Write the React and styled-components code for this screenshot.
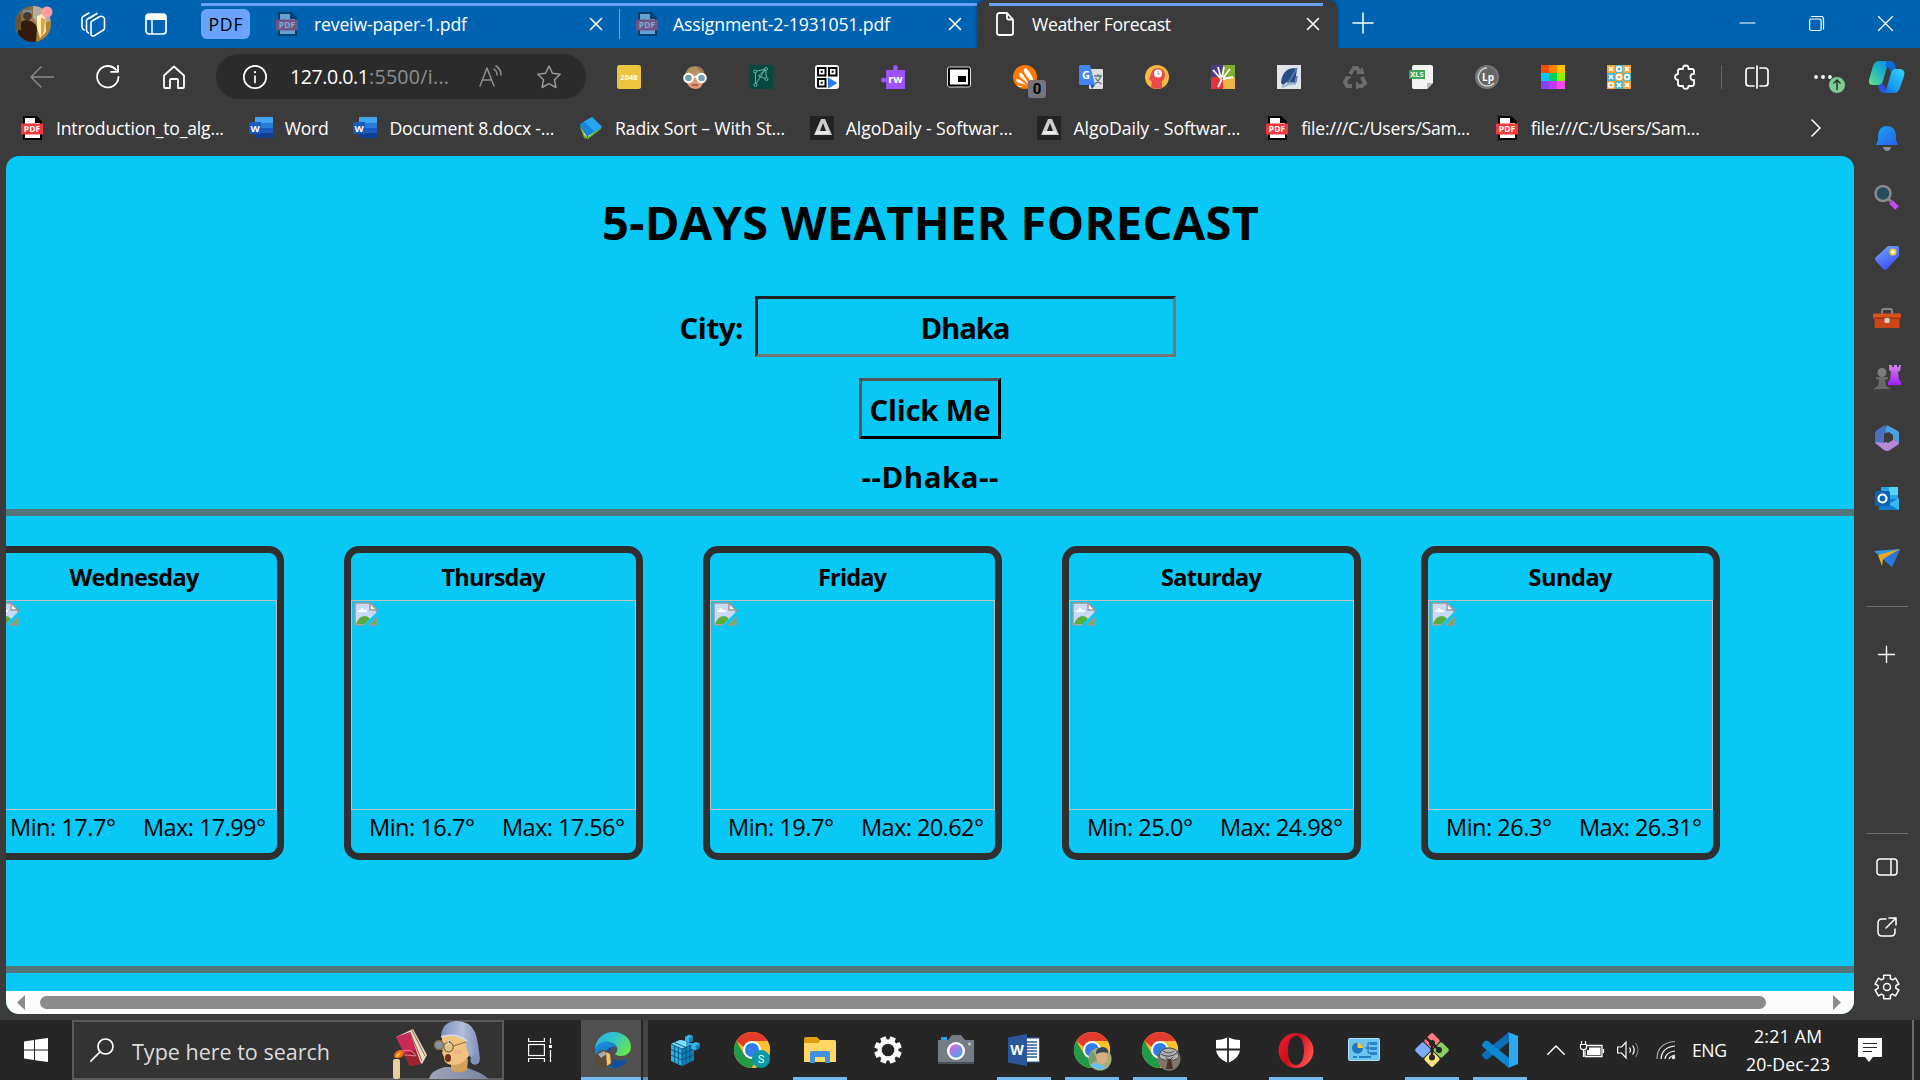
import React, { useLayoutEffect, useRef, useState } from "react";
import styled, { createGlobalStyle, css } from "styled-components";

const Global = createGlobalStyle`
  html, body { margin: 0; padding: 0; overflow: hidden; background: #3b3b3b; }
  * { box-sizing: border-box; }
  body { font-family: "Open Sans", "Noto Sans", sans-serif; }
  svg { display: block; flex: none; overflow: visible; }
`;

/* Text that is tracked in or out to fill a known width */
const FitBox = styled.span`
  display: block;
  flex: none;
  width: ${(p) => p.$w}px;
  margin-left: ${(p) => p.$ml || 0}px;
  white-space: pre;
`;
const FitInner = styled.span`
  display: inline-block;
  font-size: 0.98em;
`;
function Fit({ w, ml, children }) {
  const ref = useRef(null);
  const [spacing, setSpacing] = useState(0);
  const text = String(children);
  useLayoutEffect(() => {
    const natural = ref.current.getBoundingClientRect().width;
    setSpacing((w - natural) / (text.length - 1));
  }, [w, text]);
  return (
    <FitBox $w={w} $ml={ml}>
      <FitInner ref={ref} style={{ letterSpacing: spacing + "px" }}>{text}</FitInner>
    </FitBox>
  );
}

const Screen = styled.div`
  width: 1920px;
  height: 1080px;
  display: flex;
  flex-direction: column;
  background: #3b3b3b;
  color: #fff;
  overflow: hidden;
`;

const Slot = styled.div`
  flex: none;
  width: ${(p) => p.$w}px;
  height: ${(p) => (p.$h ? p.$h + "px" : "auto")};
  margin-left: ${(p) => p.$ml || 0}px;
  display: flex;
  align-items: center;
  justify-content: center;
  position: relative;
`;

/* ---------- tab strip ---------- */
const TabStrip = styled.div`
  flex: none;
  height: 48px;
  display: flex;
  background: #0063b1;
  font-size: 18px;
  line-height: 24px;
`;
const TabGroup = styled.div`
  width: 776px;
  margin-left: 34px;
  padding-top: 3px;
`;
const GroupLine = styled.div`
  height: 3px;
  margin: 0 ${(p) => p.$r || 0}px 0 ${(p) => p.$l || 0}px;
  background: #69a1fa;
`;
const TabRow = styled.div`
  height: 36px;
  display: flex;
  align-items: center;
`;
const GroupPill = styled.div`
  width: 49px;
  height: 30px;
  display: flex;
  justify-content: center;
  align-items: center;
  background: #6ba3fb;
  color: #000;
  border-radius: 6px;
`;
const TabDivider = styled.div`
  width: 1px;
  height: 30px;
  margin: 0 16px 0 16px;
  background: #6fa5d2;
`;
const ActiveTab = styled.div`
  width: 360px;
  padding-top: 3px;
  background: #3b3b3b;
  border-radius: 9px 9px 0 0;
  box-shadow: 0 0 4px rgba(0, 0, 0, 0.45);
`;

/* ---------- toolbar ---------- */
const Toolbar = styled.div`
  flex: none;
  position: relative;
  height: 57px;
  display: flex;
  align-items: center;
  background: #3b3b3b;
`;
const Address = styled.div`
  width: 370px;
  height: 45px;
  margin-left: 30px;
  display: flex;
  align-items: center;
  border-radius: 23px;
  background: #2b2b2b;
  font-size: 20px;
  line-height: 28px;
`;
const Dim = styled.div`
  color: #8f8f8f;
`;
const Badge = styled.div`
  position: absolute;
  left: 15px;
  top: 15px;
  width: 18px;
  height: 18px;
  border-radius: 3px;
  background: #757581;
  color: #000;
  font: bold 15px/19px Roboto, sans-serif;
  text-align: center;
`;
const Separator = styled.div`
  width: 1px;
  height: 24px;
  margin-left: 24px;
  background: #666;
`;

const Body = styled.div`
  height: 915px;
  display: flex;
`;
const Left = styled.div`
  width: 1854px;
`;
const Bookmarks = styled.div`
  height: 51px;
  padding-left: 20px;
  display: flex;
  align-items: center;
  font-size: 18px;
  line-height: 24px;
  padding-bottom: 5px;
`;
const Bookmark = styled.div`
  display: flex;
  align-items: center;
  margin-right: 24.7px;
  gap: 12px;
`;

/* ---------- page ---------- */
const View = styled.main`
  width: 1848px;
  height: 858px;
  margin-left: 6px;
  display: flex;
  flex-direction: column;
  align-items: center;
  border-radius: 13px;
  background: #08c8f6;
  color: #000;
  overflow: hidden;
`;
const Title = styled.h1`
  margin: 34px 0 0;
  font-size: 48px;
  line-height: 64px;
  font-weight: 700;
`;
const CityRow = styled.div`
  margin: 42px 5px 0 0;
  display: flex;
  align-items: center;
  font-size: 30px;
  line-height: 40px;
  font-weight: 700;
`;
const CityLabel = styled.div`
  padding-top: 3px;
`;
const CityInput = styled.div`
  width: 421px;
  height: 61px;
  margin-left: 11px;
  padding-top: 3px;
  padding-left: 1px;
  display: flex;
  align-items: center;
  justify-content: center;
  border: 3px solid;
  border-color: #212121 #767676 #767676 #212121;
`;
const Button = styled.div`
  width: 142px;
  height: 61px;
  margin-top: 21px;
  padding-top: 2px;
  display: flex;
  align-items: center;
  justify-content: center;
  border: 3px solid;
  border-color: #555 #000 #000 #555;
  font-size: 30px;
  font-weight: 700;
`;
const CityName = styled.div`
  margin-top: 18px;
  font-size: 30px;
  line-height: 40px;
  font-weight: 700;
`;
const Rule = styled.div`
  flex: none;
  width: 100%;
  height: 7px;
  margin-top: ${(p) => p.$mt}px;
  background: #52757b;
`;
const Cards = styled.div`
  align-self: flex-start;
  flex: none;
  margin: 30px 0 0 -21px;
  display: flex;
  gap: 60px;
`;
const Card = styled.section`
  flex: none;
  width: 299px;
  height: 314px;
  border: 7px solid #2f2f2f;
  border-radius: 15px;
  font-size: 24px;
`;
const Day = styled.div`
  height: 47px;
  display: flex;
  align-items: center;
  justify-content: center;
  font-weight: 700;
`;
const Picture = styled.div`
  height: 210px;
  border: 1px solid #c0c0c0;
  padding: 1px 2px;
`;
const Temps = styled.div`
  display: flex;
  line-height: 34px;
  padding-left: 18px;
`;
const Scrollbar = styled.div`
  flex: none;
  width: 100%;
  height: 23px;
  margin-top: auto;
  padding: 0 12px 0 11px;
  display: flex;
  align-items: center;
  background: #fcfcfc;
`;
const Thumb = styled.div`
  width: 1726px;
  height: 13px;
  margin: 0 67px 0 15px;
  border-radius: 7px;
  background: #8b8b8b;
`;

/* ---------- sidebar ---------- */
const Sidebar = styled.aside`
  width: 66px;
  display: flex;
  flex-direction: column;
  align-items: center;
  padding-top: 3px;
`;
const SideSlot = styled.div`
  flex: none;
  height: 60px;
  display: flex;
  align-items: center;
`;
const SideLine = styled.div`
  flex: none;
  width: 42px;
  height: 1px;
  background: #6f6f6f;
  margin-top: ${(p) => p.$mt}px;
  margin-bottom: ${(p) => p.$mb || 0}px;
`;

/* ---------- taskbar ---------- */
const Taskbar = styled.footer`
  flex: none;
  height: 60px;
  display: flex;
  background: #262626;
`;
const Search = styled.div`
  width: 432px;
  height: 60px;
  border: 2px solid #5a5a5a;
  background: #333;
  display: flex;
  align-items: center;
  padding-left: 16px;
  font-size: 22px;
  color: #dcdcdc;
`;
const SearchText = styled.div`
  padding-top: 2px;
`;
const Task = styled.div`
  flex: none;
  width: ${(p) => p.$w || 54}px;
  height: 60px;
  margin-left: ${(p) => (p.$ml === undefined ? 14 : p.$ml)}px;
  display: flex;
  align-items: center;
  justify-content: center;
  ${(p) => p.$hot && css`background: #505050;`}
  ${(p) => p.$on && css`box-shadow: inset 0 -3px 0 #76b9ed;`}
`;
const TaskEdge = styled.div`
  width: 5px;
  margin-left: 2px;
  background: #444;
  box-shadow: inset 0 -3px 0 #5e93bd;
`;
const Clock = styled.div`
  width: 86px;
  margin-left: 18px;
  display: flex;
  flex-direction: column;
  align-items: center;
  font-size: 18px;
  line-height: 28px;
  padding-top: 2px;
`;
const Lang = styled.div`
  font-size: 18px;
  line-height: 60px;
`;
const ShowDesktop = styled.div`
  width: 2px;
  margin-left: 30px;
  background: #6b6b6b;
`;

/* ---------- icons ---------- */
const Svg = ({ w = 24, h, vb, children, ...rest }) => (
  <svg width={w} height={h || w} viewBox={vb || `0 0 ${w} ${h || w}`} fill="none" {...rest}>{children}</svg>
);
const Line = ({ d, w = 24, h, c = "#fff", sw = 1.6, children }) => (
  <Svg w={w} h={h} stroke={c} strokeWidth={sw} strokeLinecap="round" strokeLinejoin="round">
    <path d={d} />
    {children}
  </Svg>
);
const Txt = ({ x, y, s, c = "#fff", children, anchor = "middle" }) => (
  <text x={x} y={y} fontSize={s} fill={c} stroke="none" fontWeight="bold" textAnchor={anchor} fontFamily="Open Sans, sans-serif">{children}</text>
);
const CloseX = ({ s = 12 }) => <Line w={s} d={`M0.5 0.5L${s - 0.5} ${s - 0.5}M${s - 0.5} 0.5L0.5 ${s - 0.5}`} />;

const Pdf = ({ faded }) => (
  <Svg w={24}>
    <path d="M4 1h12l5 5v17H4z" fill={faded ? "#66a1d0" : "#fff"} stroke={faded ? "#053d6b" : "#000"} strokeWidth="2" />
    <path d="M15 1v6h6" fill={faded ? "#053d6b" : "#000"} />
    <rect x="1" y="7.500" width="22" height="11" rx="1" fill={faded ? "#705483" : "#f3383b"} />
    <Txt x={12} y={16.300} s={8.500} c={faded ? "#79add6" : "#fff"}>PDF</Txt>
  </Svg>
);
const Avatar = () => (
  <Svg w={36}>
    <defs>
      <clipPath id="av"><circle cx="18" cy="18" r="18" /></clipPath>
      <linearGradient id="avg" x1="0" y1="0" x2="1" y2="1">
        <stop offset="0" stopColor="#5a564e" /><stop offset="0.5" stopColor="#a98746" /><stop offset="1" stopColor="#b77a25" />
      </linearGradient>
    </defs>
    <g clipPath="url(#av)">
      <rect width="36" height="36" fill="url(#avg)" />
      <path d="M18 0h18v15l-12 3-6-6z" fill="#b6ad9c" />
      <path d="M22 10l8-3 1 19-6 6-3-10z" fill="#fff0b8" />
      <path d="M26 12l4 1-1 13-3 5z" fill="#d9a441" />
      <path d="M3 18q5-4 9-4 8 1 10 8l-1 14H2z" fill="#33190e" />
      <circle cx="12.500" cy="10" r="4.300" fill="#4d3627" />
      <path d="M8 8q4-4 9 0V4H8z" fill="#778aa4" />
      <path d="M0 8h6v16H0z" fill="#6b5433" />
    </g>
    <circle cx="32" cy="6" r="5.500" fill="#ff9d9d" />
  </Svg>
);
const Word = () => (
  <Svg w={24}>
    <rect x="6" y="1" width="18" height="6" fill="#41a5ee" /><rect x="6" y="7" width="18" height="5" fill="#2b7cd3" />
    <rect x="6" y="12" width="18" height="5" fill="#185abd" /><rect x="6" y="17" width="18" height="5" fill="#103f91" />
    <rect x="0" y="6" width="12" height="12" fill="#185abd" /><Txt x={6} y={15.500} s={9.500}>W</Txt>
  </Svg>
);
const Book = () => (
  <Svg w={24}>
    <path d="M1 8v3l4 11 4 1 13-10v-3z" fill="#5cb52d" /><path d="M1 9l5 11 3 1 13-10v-2z" fill="#dfe9b8" />
    <path d="M13 1L1 8l8 12 14-9z" fill="#1287dc" /><path d="M13 1L5 5.500 16 16l7-5z" fill="#27a6ef" />
    <path d="M1 8l8 12v2L1 10z" fill="#0b5ea5" />
  </Svg>
);
const Algo = () => (
  <Svg w={24}>
    <rect width="24" height="24" fill="#222" />
    <path fillRule="evenodd" d="M11 3h4l7 16H4zM13 7l-3 8h6z" fill="#cdcdcd" /><rect x="6" y="15" width="13" height="3" fill="#e9e9e9" />
  </Svg>
);
const ChromeMark = ({ overlay }) => (
  <Svg w={36}>
    <circle cx="18" cy="18" r="18" fill="#fbc02d" />
    <path d="M2.400 9A18 18 0 0 1 33.600 9H18a9 9 0 0 0-8.500 6z" fill="#e33b2e" />
    <path d="M2.400 9A18 18 0 0 0 18 36l7.500-13.500L10.500 23z" fill="#1f9a49" />
    <path d="M18 9h15.600A18 18 0 0 1 18 36l8-14z" fill="#fbc02d" />
    <circle cx="18" cy="18" r="9" fill="#fff" /><circle cx="18" cy="18" r="7" fill="#2f7de9" />
    {overlay === "S" && <><circle cx="27" cy="27" r="9" fill="#0b9aa8" /><text x="27" y="31" fontSize="11" fill="#fff" textAnchor="middle" fontFamily="Roboto">S</text></>}
    {overlay === "man" && <><circle cx="26" cy="27" r="11.500" fill="#a9ad7c" /><path d="M16 32q-3-8 3-13l4 9z" fill="#7d9a6a" /><ellipse cx="28" cy="25" rx="5.500" ry="7" fill="#d9ad86" /><path d="M22 22q-1-6 7-7 6 1 5 6-6-2-12 1z" fill="#33485a" /><path d="M16 33q5-3 10-1 4 2 7 3-7 6-17-2z" fill="#6cc2ef" /></>}
    {overlay === "tree" && <><circle cx="27" cy="27" r="11.500" fill="#80766c" /><path d="M17 25q1-9 10-9t10 9q-5 5-10 2-5 3-10-2z" fill="#b2b2b2" stroke="#4c4c4c" /><path d="M19 22q8 5 16-1M21 19q6 4 11 0M24 25l3 4 4-4" stroke="#444" /><path d="M26 27h3l2 10h-7z" fill="#49332c" /></>}
  </Svg>
);
const Edge = () => (
  <Svg w={36}>
    <defs>
      <linearGradient id="eg" x1="0" y1="0" x2="1" y2="0.6"><stop offset="0" stopColor="#2aa9e8" /><stop offset="0.5" stopColor="#35c6c9" /><stop offset="1" stopColor="#62e44e" /></linearGradient>
      <linearGradient id="eb" x1="0" y1="0" x2="0.400" y2="1"><stop offset="0" stopColor="#1b93df" /><stop offset="1" stopColor="#0f66b8" /></linearGradient>
    </defs>
    <path d="M0 18C0 11 5 9 11 9c6 0 11 3 11 7-1-1-3-2-5-1-3 2-3 6-1 9 3 5 10 6 17 3-3 6-8 9-15 9C7 36 0 28 0 18z" fill="url(#eb)" />
    <path d="M11 22c0-4 3-7 7-7-3 2-4 6-2 9 3 5 10 6 17 3-3 6-8 9-14 9-5-3-8-8-8-14z" fill="#114f9d" />
    <path d="M0 17C1 6 9 0 18 0c11 0 18 7 18 15 0 6-5 9-10 9-4 0-7-2-5-3 3-4 1-8-3-10C12 8 3 9 0 17z" fill="url(#eg)" />
    <circle cx="9" cy="27" r="9" fill="#5c4937" /><path d="M11 20l4 2 1 9-4 3z" fill="#efc568" /><path d="M3 22l6-3 3 3-6 4z" fill="#aaa" />
  </Svg>
);
const Copilot = () => (
  <Svg w={36} h={32}>
    <defs>
      <linearGradient id="cp1" x1="1" y1="0" x2="0" y2="1"><stop offset="0" stopColor="#0883e8" /><stop offset="0.5" stopColor="#20b5c5" /><stop offset="1" stopColor="#68e486" /></linearGradient>
      <linearGradient id="cp2" x1="1" y1="0" x2="0" y2="1"><stop offset="0" stopColor="#3bd2f7" /><stop offset="0.6" stopColor="#169ff0" /><stop offset="1" stopColor="#1b55d6" /></linearGradient>
    </defs>
    <path d="M10 0h13q-4 2-5 6l-4 14q-1 3-4 4H4q-5 0-4-5L4 5q2-5 6-5z" fill="url(#cp1)" />
    <path d="M26 8h5q6 1 4 7l-4 12q-2 5-6 5H12q5-1 6-6l4-14q1-4 4-4z" fill="url(#cp2)" />
    <path d="M17 0h6q3 1 4 8h-2q-3 0-4 3 0-5-4-5z" fill="#0c6bd4" />
    <path d="M9 24h1q3 0 4-3 0 5 4 6-1 4-4 5-4-1-5-8z" fill="#2553de" />
  </Svg>
);

const E = {
  g2048: <Svg><rect width="24" height="24" rx="2.500" fill="#ecc440" /><Txt x={12} y={15} s={7.600}>2048</Txt></Svg>,
  face: <Svg><path d="M2 13Q2 1 12 1t10 12l-3 5H5z" fill="#a3754e" /><path d="M3 13l1-5h17v6q-1 10-9 10T3 13z" fill="#dd9a76" /><path d="M2 12Q3 2 13 2l9 9-6-2-12 1z" fill="#b59464" /><circle cx="5.500" cy="13" r="4.300" fill="#6fa0b0" stroke="#fff" strokeWidth="2" /><circle cx="18.500" cy="13" r="4.300" fill="#6fa0b0" stroke="#fff" strokeWidth="2" /><path d="M9 12h6" stroke="#fff" strokeWidth="1.500" /><path d="M9 20h6" stroke="#b5483f" strokeWidth="1.500" /></Svg>,
  graph: <Svg><rect width="24" height="24" fill="#04483f" /><path d="M6.500 6.500L16.500 4l1 10-8-3 7-7M6.500 6.500v13l10-15.500" stroke="#6cb5a3" /><g fill="#04483f" stroke="#6cb5a3"><circle cx="6" cy="6.500" r="1.500" /><circle cx="17" cy="4" r="1.500" /><circle cx="17.500" cy="14" r="1.500" /><circle cx="6.500" cy="20" r="1.500" /></g></Svg>,
  qr: <Svg><rect width="24" height="24" rx="3" fill="#fff" /><g stroke="#000" strokeWidth="2"><rect x="3" y="3" width="7.500" height="7.500" /><rect x="14" y="3" width="7.500" height="7.500" /><rect x="3" y="14" width="7.500" height="7.500" /></g><g fill="#000"><rect x="5.700" y="5.700" width="2" height="2" /><rect x="16.700" y="5.700" width="2" height="2" /><rect x="5.700" y="16.700" width="2" height="2" /></g><path d="M13 12.500l9.500 5.500-9.500 5.500z" fill="#2878e8" /></Svg>,
  rw: <Svg><path d="M5 5h7.500V4a2.500 2.500 0 1 1 4 0v1H24v19H5v-7H4a2.500 2.500 0 1 1 0-4h1z" fill="#9b54fa" /><Txt x={14.500} y={17.500} s={11}>rw</Txt></Svg>,
  pip: <Svg><rect x="0.500" y="2" width="23" height="20" rx="2" fill="#000" stroke="#ddd" /><rect x="3" y="4.500" width="18" height="15" fill="#fff" /><rect x="11" y="11" width="8" height="6" fill="#000" /></Svg>,
  avast: <Svg><circle cx="12" cy="12" r="12" fill="#ff7800" /><path d="M13 3q-3 1-2 4l9 13q2-8-7-17z" fill="#fff" /><path d="M6.500 8q-1 3 2 5l8 7-7-11q-2-2-3-1zM3 15q0 2 3 3l8 2-7-5q-3-2-4 0zM4 20l7 2H6z" fill="#fff" /></Svg>,
  translate: <Svg><rect x="10" y="4" width="14" height="20" rx="1" fill="#dedede" /><path d="M1.500 0H11l5 20H1.500Q0 20 0 18.500v-17Q0 0 1.500 0z" fill="#4386f3" /><path d="M11.500 20H16l-3 4z" fill="#1d4eb2" /><Txt x={7} y={14} s={11}>G</Txt><path d="M15 11h8M19 9v2M22 11q-2 5-6 8M16.500 13q2 4 6 6" stroke="#5a7784" strokeWidth="1.300" /></Svg>,
  head: <Svg><circle cx="12" cy="12" r="12" fill="#f2bb43" /><path d="M6 22l1-5-3-3 2-5q1-6 7-6 7 1 7 7 0 4-3 6v7q-6 2-11-1z" fill="#ee494f" /><circle cx="13" cy="8.500" r="4" fill="#fff" /><path d="M13 6v3h2" stroke="#999" /></Svg>,
  burst: <Svg><rect width="12" height="12" fill="#4c3b85" /><rect x="12" width="12" height="12" fill="#7fae2a" /><rect y="12" width="12" height="12" fill="#e2333a" /><rect x="12" y="12" width="12" height="12" fill="#eab64a" /><path d="M10 14L2 5M10 13L7 2M11 12l2-10M12 13l7-9M12 14l10-2M11 14l-4 8" stroke="#fff" strokeWidth="1.800" /></Svg>,
  sigma: <Svg><rect width="24" height="24" fill="#dfe5ea" /><path d="M4 18Q5 4 17 3l3 1-2 14-8-1-4 3z" fill="#274d85" /><path d="M20 3L10 20l9-3 1-6" stroke="#5b7fae" strokeWidth="1.500" /><path d="M5 22q8-4 14-3" stroke="#9db6d2" strokeWidth="2" /></Svg>,
  recycle: <Svg stroke="#6c6c6c" strokeWidth="4"><path d="M7 9l4-6h3l3 5M19 12l3 6-3 3h-5M9 21H4l-2-4 3-5" /><path d="M15 8h5l-1-4zM14 17v7M8 12l-6 1" strokeWidth="2" /></Svg>,
  xls: <Svg><path d="M5 0h17q2 0 2 2v16l-6 6H5q-2 0-2-2V2q0-2 2-2z" fill="#f2f2f2" /><path d="M24 18h-6v6z" fill="#b9b9b9" /><rect x="0" y="5" width="16" height="9" fill="#3ca654" /><Txt x={8} y={12.300} s={7.500}>XLS</Txt></Svg>,
  lp: <Svg><circle cx="12" cy="12" r="11" fill="#666" stroke="#777" strokeWidth="2" /><path d="M12 3a9 9 0 1 0 7 15" stroke="#d0d0d0" strokeWidth="1.500" /><Txt x={13} y={16} s={10}>Lp</Txt></Svg>,
  colors: <Svg>{["#f84b08", "#ff8500", "#ffc400", "#06c7f9", "#00cc58", "#91ef00", "#8741f4", "#c735fb", "#ff48ee"].map((c, i) => <rect key={c} x={(i % 3) * 8} y={Math.floor(i / 3) * 8} width="8" height="8" fill={c} />)}</Svg>,
  xo: <Svg>{["x", "o", "x", "x", "o", "o", "o", "x", "x"].map((k, i) => { const x = (i % 3) * 8, y = Math.floor(i / 3) * 8; return <g key={i}><rect x={x} y={y} width="8" height="8" fill={i % 2 ? "#45b8c9" : "#f2a536"} />{k === "x" ? <path d={`M${x + 2} ${y + 2}l4 4m0-4l-4 4`} stroke="#fff" strokeWidth="1.700" /> : <circle cx={x + 4} cy={y + 4} r="2.400" stroke="#fff" strokeWidth="1.700" />}</g>; })}</Svg>,
  puzzle: <Line sw={1.800} d="M7 4h3q-.5-3.500 2.700-3.500T15.500 4H19q2 0 2 2v3q-3.500-.5-3.500 3t3.500 3v4q0 2-2 2h-3.500q0 2.800-2.800 2.800T10 21H7q-2 0-2-2v-4q-3-.3-3-3t3-3V6q0-2 2-2z" />,
};
const EXT = ["g2048", "face", "graph", "qr", "rw", "pip", "avast", "translate", "head", "burst", "sigma", "recycle", "xls", "lp", "colors", "xo", "puzzle"];

const MARKS = [
  [<Pdf />, 168, "Introduction_to_alg..."],
  [<Word />, 44, "Word"],
  [<Word />, 165, "Document 8.docx -..."],
  [<Book />, 170, "Radix Sort – With St..."],
  [<Algo />, 167, "AlgoDaily - Softwar..."],
  [<Algo />, 167, "AlgoDaily - Softwar..."],
  [<Pdf />, 169, "file:///C:/Users/Sam..."],
  [<Pdf />, 169, "file:///C:/Users/Sam..."],
];

const SIDE = [
  <Svg><defs><linearGradient id="bl" x1="0" y1="0" x2="1" y2="1"><stop offset="0" stopColor="#1ba4ea" /><stop offset="1" stopColor="#285ff0" /></linearGradient></defs><path d="M1 19l2-5V9q1-9 9-9t9 9v5l2 5z" fill="url(#bl)" /><path d="M8 21h8q-1 4-4 4t-4-4z" fill="#8d949c" /></Svg>,
  <Svg w={26}><circle cx="9" cy="8.500" r="7.500" fill="#294b60" stroke="#8a8a8a" strokeWidth="2.500" /><path d="M14 13.500l3 3" stroke="#888" strokeWidth="3" /><path d="M17 17l6 6" stroke="#c64cf0" strokeWidth="5" /></Svg>,
  <Svg><defs><linearGradient id="tg" x1="0" y1="0" x2="0.500" y2="1"><stop offset="0" stopColor="#73aafc" /><stop offset="1" stopColor="#3d51fa" /></linearGradient></defs><path d="M13 0h9q2 0 2 2v8L12 23q-2 2-4 0L1 15q-2-2 0-4z" fill="url(#tg)" /><circle cx="18" cy="6" r="2.600" fill="#fff" stroke="#f3cd23" strokeWidth="1.800" /></Svg>,
  <Svg w={28} h={20}><path d="M9 7V3q0-2 2-2h6q2 0 2 2v4" stroke="#858585" strokeWidth="2" /><rect x="1.500" y="8" width="25" height="12" rx="1.500" fill="#cb4518" /><rect x="0" y="5.500" width="28" height="5" rx="1" fill="#d9531a" /><rect x="0" y="9.500" width="28" height="1.500" fill="#99330e" /><rect x="11.500" y="10" width="5" height="5" rx="1" fill="#d0d0d0" /></Svg>,
  <Svg w={28}><defs><linearGradient id="rk" x1="0" y1="0" x2="0" y2="1"><stop offset="0" stopColor="#d980ee" /><stop offset="1" stopColor="#a21ef2" /></linearGradient></defs><path d="M16 1h3v2h2V1h3v2h2V1h2l-1 6-2 1 1 8 2 2v3H15v-3l2-2 1-8-2-2z" fill="url(#rk)" /><circle cx="9" cy="8.500" r="4.500" fill="#7d7d7d" /><path d="M3 13h12v2l-3 1 1 6 5 3v3H0v-3l5-3 1-6-3-1z" fill="#6a6a6a" /><path d="M0 25h18v3H0z" fill="#414141" /></Svg>,
  <Svg w={24} h={26}><path d="M10 0L2 5Q0 6 0 8v10l9 5V9l5-3z" fill="#4a70c2" /><path d="M12 0l10 5.500q2 1 2 3V18l-7-5V11L10 6z" fill="#4ba0e3" /><path d="M0 18l3-1 6 1 8-5 7 5v1l-9 6q-3 2-6 0z" fill="#b48ad8" /><path d="M9 10l5-3 4 3v5l-5 3-4-2z" fill="#3b3b3b" /></Svg>,
  <Svg><path d="M6 1h17v18H6z" fill="#28a8ea" /><path d="M14 1h9v8h-9z" fill="#54d2f8" /><path d="M4 13h20v11H4z" fill="#1379ca" /><path d="M24 12v12L13 18z" fill="#35b8f1" /><rect x="0" y="5" width="15" height="15" rx="1.500" fill="#0a63b8" /><circle cx="7.500" cy="12.500" r="4" stroke="#fff" strokeWidth="2.200" /></Svg>,
  <Svg w={26} h={20}><path d="M0 3L26 1 18 19z" fill="#2d9be9" /><path d="M9 9L26 1 18 19z" fill="#2a75de" /><path d="M4 7L26 1 9 11 8 18z" fill="#f2a81d" /></Svg>,
];

const Broken = () => (
  <Svg w={24}>
    <path d="M1 1h15l7 7v4L12 23H1z" fill="#c9daf6" stroke="#999" strokeWidth="1.500" />
    <path d="M16 1v7h7z" fill="#fff" stroke="#999" strokeWidth="1.500" />
    <path d="M4 10q0-2 2-2 2-4 4 0 3-1 3 2z" fill="#fff" />
    <path d="M2 22q3-8 9-8 3 0 5 3l-5 5z" fill="#5aad3b" />
    <path d="M23 15v8h-8z" fill="#75ae5b" stroke="#999" strokeWidth="1.300" />
    <path d="M11 24L24 11" stroke="#08c8f6" strokeWidth="3" />
  </Svg>
);

const DAYS = [
  ["Wednesday", 130, "17.7°", "17.99°"],
  ["Thursday", 104, "16.7°", "17.56°"],
  ["Friday", 69, "19.7°", "20.62°"],
  ["Saturday", 101, "25.0°", "24.98°"],
  ["Sunday", 84, "26.3°", "26.31°"],
];

const Doodle = () => (
  <Svg w={104} h={58}>
    <defs>
      <linearGradient id="hat" x1="0" y1="0" x2="1" y2="0"><stop offset="0" stopColor="#7e90bb" /><stop offset="0.550" stopColor="#b3bdda" /><stop offset="1" stopColor="#7c8fba" /></linearGradient>
      <linearGradient id="gown" x1="0" y1="0" x2="1" y2="0"><stop offset="0" stopColor="#a3a2bb" /><stop offset="1" stopColor="#75859f" /></linearGradient>
    </defs>
    <rect x="1" y="38" width="7" height="20" rx="2" fill="#e6cf9c" />
    <path d="M3 37q-3-5 4-8l6 0q-1 7-6 8z" fill="#f06a12" /><path d="M4 36q0-4 5-5-1 4-4 5z" fill="#ffc93d" />
    <path d="M4 16L21 8l14 26-5 9z" fill="#eadcc4" /><path d="M4 16l14-5 11 32-11 2z" fill="#c92a58" /><path d="M12 33l11-4 6 14-11 2z" fill="#9c2330" />
    <path d="M18 11l12 29M20 9l13 26" stroke="#8a6a48" /><path d="M11 30q9-3 13 5M12 34q6 0 11 1" stroke="#e58ba0" />
    <path d="M37 58q2-9 16-12h18q17 4 26 12z" fill="url(#gown)" />
    <path d="M59 38h17l-1 11q-8 5-16 0z" fill="#d2a15c" />
    <path d="M50 14q13-4 25 5l3 14q-4 8-14 11-12 1-12-8l-2-4 1-3-4-1q-2-3 3-6z" fill="#efc27d" />
    <path d="M49 15Q50 1 64 0q14 0 19 11 3 8 5 27l-7 1q-8-8-7-19Q64 11 49 15z" fill="url(#hat)" />
    <path d="M49 16q14-5 26 4" stroke="#d5dcee" strokeWidth="1.500" />
    <circle cx="83" cy="39" r="4.700" fill="#7d90ba" />
    <circle cx="47" cy="24" r="4.500" stroke="#8a6a3d" strokeWidth="1.300" fill="#8391a5" /><circle cx="56.500" cy="26" r="4.800" stroke="#8a6a3d" strokeWidth="1.300" fill="#e6c38a" />
    <path d="M61 25l13-4" stroke="#8a6a3d" /><circle cx="57" cy="21" r="1.500" fill="#fff" /><circle cx="57.500" cy="21" r="0.900" fill="#333" />
    <ellipse cx="56" cy="37" rx="3" ry="4" fill="#742a1e" /><ellipse cx="66" cy="31" rx="4" ry="2" fill="#f2ac94" />
  </Svg>
);

const Files = () => (<Svg w={32} h={26}><path d="M0 2q0-2 2-2h11l3 3h14q2 0 2 2v16H0z" fill="#e0a011" /><path d="M16 3h14q2 0 2 2v3H14z" fill="#ffd765" /><path d="M0 6h32v19H0z" fill="#ffd765" /><path d="M6 26V16q0-2 2-2h16q2 0 2 2v10h-5v-6H11v6z" fill="#3f93dc" /></Svg>);
const Registry = () => (
  <Svg w={32} h={32}>
    <path d="M1 10l9-4 14 4v16l-12 6L1 27z" fill="#2cb1e4" /><path d="M12 15l12-5v16l-12 6z" fill="#137fb8" /><path d="M1 10l9-4 6 1v6l-4 2z" fill="#7ddcf8" />
    <path d="M4.700 11.500v17M8.400 13v17.500M16 13v16.500M20 11.500v16.500M1 15.500l11 4.500 12-5M1 21l11 5 12-5.500M12 15v17M4.500 8.500L16 13.500M1 10l11 5 12-5" stroke="#0a4e77" strokeWidth="0.900" />
    <path d="M15 3l4-2.500 4 1.500-.5 5-4 1.500-3.500-2z" fill="#38b3e8" /><path d="M19 4l4-2-.5 5-3.500 1.500z" fill="#1583b7" />
    <path d="M21 10l5-2 4 1.500-1 5-4 2-3.500-2z" fill="#38b3e8" /><path d="M25.500 12l4.500-2.500-1 5-3.500 2z" fill="#1583b7" />
  </Svg>
);
const gearPath = (cx, cy, ro, ri, n, half) => {
  const pts = [];
  for (let i = 0; i < n; i++) {
    const a = (i / n) * Math.PI * 2 - Math.PI / 2 + (half ? Math.PI / n : 0);
    [[-0.26, ri], [-0.19, ro], [0.19, ro], [0.26, ri]].forEach(([o, r]) => {
      const t = a + o * (8 / n) * 1.1;
      pts.push(`${(cx + r * Math.cos(t)).toFixed(2)} ${(cy + r * Math.sin(t)).toFixed(2)}`);
    });
  }
  return "M" + pts.join("L") + "Z";
};
const Gear = () => (<Svg w={28}><path d={gearPath(14, 14, 14, 10.500, 8, true)} fill="#fff" /><circle cx="14" cy="14" r="6.300" fill="#262626" /></Svg>);
const Camera = () => (
  <Svg w={36} h={30}><defs><linearGradient id="cm" x1="0" y1="0" x2="1" y2="1"><stop offset="0.200" stopColor="#c56fe0" /><stop offset="1" stopColor="#2fb0f5" /></linearGradient></defs>
    <path d="M0 5h10l4-5h9l4 5h9v24H0z" fill="#767c85" /><rect x="3" y="2" width="6" height="3" fill="#2ba3e8" /><rect y="27" width="36" height="2" fill="#4b5059" />
    <circle cx="18" cy="16" r="9" fill="#fff" /><circle cx="18" cy="16" r="6.700" fill="url(#cm)" /><circle cx="31.500" cy="9" r="1.500" fill="#c9ccd1" /></Svg>
);
const WordBig = () => (<Svg w={32}><rect x="16" y="4" width="15.500" height="24" fill="#fff" stroke="#2b579a" /><path d="M19 8h10M19 11h10M19 14h10M19 17h10M19 20h10M19 23h10" stroke="#2b579a" strokeWidth="1.500" /><path d="M0 3.500L19 0v32L0 28.500z" fill="#2b579a" /><Txt x={9} y={21} s={14}>W</Txt></Svg>);
const Shield = () => (<Svg w={26}><path d="M13 0q5 3 12 3v9q0 9-12 14Q1 21 1 12V3q7 0 12-3z" fill="#fff" /><path d="M13 0v26M0 12.500h26" stroke="#262626" strokeWidth="1.800" /></Svg>);
const Opera = () => (<Svg w={36}><defs><linearGradient id="op" x1="0" y1="0" x2="1" y2="0.500"><stop offset="0" stopColor="#ff1b2d" /><stop offset="0.500" stopColor="#c5101f" /><stop offset="1" stopColor="#ff4b4b" /></linearGradient></defs><path fillRule="evenodd" d="M18 1a17.500 17.500 0 1 1 0 35 17.500 17.500 0 1 1 0-35zM18 4c-5 0-8 6-8 14.500S13 33 18 33s8-6 8-14.500S23 4 18 4z" fill="url(#op)" /></Svg>);
const Panel = () => (<Svg w={32} h={24}><rect x="0.500" y="0.500" width="31" height="22" rx="1" fill="#6cc5f0" stroke="#b4e0f5" /><circle cx="9.500" cy="10" r="5.500" fill="#2177b8" /><path d="M9.500 10V4.500A5.500 5.500 0 0 1 15 10z" fill="#f6c343" /><path d="M17 10h3V5h2M20 10h2M20 10v5h2" stroke="#1763a3" /><path d="M22 4h7v3h-7zM22 9h7v3h-7zM22 14h7v3h-7z" fill="#2a84c6" /><path d="M5 19h22" stroke="#2580c4" strokeWidth="2" strokeDasharray="4 2 12" /></Svg>);
const Git = () => (<Svg w={36}><g transform="rotate(45 18 18)"><rect x="5.500" y="5.500" width="12" height="12" rx="2" fill="#ff7b7b" /><rect x="18.500" y="5.500" width="12" height="12" rx="2" fill="#86d160" /><rect x="5.500" y="18.500" width="12" height="12" rx="2" fill="#7bacfd" /><rect x="18.500" y="18.500" width="12" height="12" rx="2" fill="#ffe27a" /></g><path d="M11 5l7 6v14M18 11l7 7" stroke="#262626" strokeWidth="2.600" /><g fill="#262626"><circle cx="18" cy="11" r="3" /><circle cx="25" cy="18" r="3" /><circle cx="18" cy="25.500" r="3" /></g></Svg>);
const Code = () => (<Svg w={36}><path d="M27 0v10L6 27q-2 1-3 0l-2-2q-2-2 0-4z" fill="#0b6fb7" /><path d="M27 36V26L6 9Q4 8 3 9l-2 2q-2 2 0 4z" fill="#0a89d2" /><path d="M26 0l10 4v28l-10 4q1-1 1-3V3q0-2-1-3z" fill="#2aa9ee" /></Svg>);

const TaskView = () => (<Svg w={26} h={24} stroke="#fff" strokeWidth="1.200"><path d="M.6 0v3.500h15.800V0M.6 24v-3.500h15.800V24M22.500 0v5.500M22.500 12v12" /><rect x="0.600" y="6.500" width="15.800" height="11" /><rect x="21" y="7" width="3" height="3" fill="#fff" stroke="none" /></Svg>);
const Battery = () => (<Svg w={24} h={18}><path d="M7 4.500h15v11H5v-6" stroke="#fff" strokeWidth="1.300" /><path d="M9 6.500h11.500v7.500H7V9h2z" fill="#fff" /><path d="M23.500 8v4M1.500 0v3.500M5.500 0v3.500M.5 3.500h6v3q0 2-3 2t-3-2zM3.500 8v8" stroke="#fff" strokeWidth="1.200" /></Svg>);
const Volume = () => (<Svg w={22} h={18} stroke="#fff" strokeWidth="1.200"><path d="M.6 6h4L9 1v16l-4.400-5h-4zM12.500 6.500q2 2.500 0 5M15.500 4.500q3.500 4.500 0 9" /><path d="M18.500 2q5 7 0 14" stroke="#777" /></Svg>);
const Wifi = () => (<Svg w={20} stroke="#fff" strokeWidth="1.200"><path d="M1 19Q1 3 19 1.500" stroke="#aaa" /><path d="M5 19Q6 7 19 6M9 19q1-7 10-8M13 19q1-3 6-4" /><circle cx="17.500" cy="17.500" r="1.700" fill="#fff" stroke="none" /></Svg>);

export default function App() {
  return (
    <Screen>
      <Global />
      <TabStrip>
        <Slot $w={36} $ml={15}><Avatar /></Slot>
        <Slot $w={26} $ml={29}>
          <Line w={25} d="M9 6l7-4.500M1 6.500V15q0 2 2 3M1 6.500q0-1 1-2L8 1M5.500 9v9q0 2 2 3M5.500 9q0-1 1-2L14 2.500M12 24q-2 0-2-2V11q0-1.500 1-2l8-4.500q3-1 4.500 2V16q0 1-1 2l-8 5q-1 1-2.500 1z" />
        </Slot>
        <Slot $w={22} $ml={39}>
          <Svg w={22}><rect x="1" y="1" width="20" height="20" rx="3" stroke="#fff" strokeWidth="1.700" /><path d="M1 3q0-2 2-2h16q2 0 2 2v4H1z" fill="#fff" /><path d="M7 6v15" stroke="#fff" strokeWidth="1.500" /></Svg>
        </Slot>
        <TabGroup>
          <GroupLine />
          <TabRow>
            <GroupPill><Fit w={34}>PDF</Fit></GroupPill>
            <Slot $w={24} $ml={25}><Pdf faded /></Slot>
            <Fit w={153} ml={15}>reveiw-paper-1.pdf</Fit>
            <Slot $w={14} $ml={122}><CloseX /></Slot>
            <TabDivider />
            <Slot $w={24} $ml={-1}><Pdf faded /></Slot>
            <Fit w={217} ml={14}>Assignment-2-1931051.pdf</Fit>
            <Slot $w={14} $ml={58}><CloseX /></Slot>
          </TabRow>
        </TabGroup>
        <ActiveTab>
          <GroupLine $l={12} $r={14} />
          <TabRow>
            <Slot $w={18} $ml={19}><Line w={18} h={24} d="M3.500 1H11l6 6.500V21q0 2-2 2H3.500Q1 23 1 21V3.500Q1 1 3.500 1zM11 1v5q0 1.500 1.500 1.500H17" sw={1.800} /></Slot>
            <Fit w={139} ml={18}>Weather Forecast</Fit>
            <Slot $w={14} $ml={135}><CloseX /></Slot>
          </TabRow>
        </ActiveTab>
        <Slot $w={20} $ml={16} $h={46}><Line w={20} d="M10 0v20M0 10h20" sw={1.500} /></Slot>
        <Slot $w={16} $ml={367} $h={46}><Line w={16} h={2} d="M0 1h15" sw={1.200} /></Slot>
        <Slot $w={16} $ml={52} $h={46}><Line w={15} d="M2.500.5H12q2.500 0 2.500 2.500v10" sw={1.200}><rect x="0.600" y="3" width="11.500" height="11.500" rx="1.500" /></Line></Slot>
        <Slot $w={16} $ml={53} $h={46}><Line w={15} d="M.5.5l14 14M14.500.5l-14 14" sw={1.200} /></Slot>
      </TabStrip>

      <Toolbar>
        <Slot $w={24} $ml={30}><Line c="#8a8a8a" d="M23.500 12H1M11 2L1 12l10 10" sw={1.500} /></Slot>
        <Slot $w={24} $ml={42}><Line d="M22.500 12A10.700 10.700 0 1 1 20 4.800M22 .8v6h-7" sw={1.800} /></Slot>
        <Slot $w={24} $ml={42}><Line d="M2 10.500L12 1.500l10 9V22q0 1-1 1h-5v-8q0-1-1-1H9q-1 0-1 1v8H3q-1 0-1-1z" sw={1.800} /></Slot>
        <Address>
          <Slot $w={26} $ml={26}><Line d="M12 11v6.500" sw={1.700}><circle cx="12" cy="12" r="11.200" /><path d="M12 7v.2" strokeWidth="2.200" /></Line></Slot>
          <Fit w={79} ml={22}>127.0.0.1</Fit>
          <Dim><Fit w={80} ml={0}>:5500/i...</Fit></Dim>
          <Slot $w={24} $ml={30}><Line c="#8f8f8f" d="M1 21L8 3l7 18M3.500 15h9M15 4q3 2 3 6M17 1q5 3 5 9" sw={1.500} /></Slot>
          <Slot $w={24} $ml={34}><Line c="#9a9a9a" d="M12 1l3.400 7.200 7.800 1-5.700 5.500 1.400 7.800-6.900-3.800-6.900 3.800 1.400-7.800L.8 9.200l7.800-1z" sw={1.500} /></Slot>
        </Address>
        {EXT.map((k, i) => (
          <Slot key={k} $w={24} $h={24} $ml={i ? 42 : 31}>{E[k]}{k === "avast" && <Badge>0</Badge>}</Slot>
        ))}
        <Separator />
        <Slot $w={24} $ml={23}><Line d="M9 3H4Q1 3 1 6v12q0 3 3 3h5M12 1v22M15 3h5q3 0 3 3v12q0 3-3 3h-5" sw={1.700} /></Slot>
        <Slot $w={32} $ml={45}>
          <Svg w={32} h={32}><g fill="#fff"><circle cx="2" cy="16" r="1.900" /><circle cx="9" cy="16" r="1.900" /><circle cx="16" cy="16" r="1.900" /></g><circle cx="23" cy="24" r="8.500" fill="#80cb94" stroke="#3b3b3b" /><path d="M23 29V19M19.500 22.500L23 19l3.500 3.500" stroke="#1d3b25" strokeWidth="1.500" /></Svg>
        </Slot>
        <Slot $w={36} $ml={23}><Copilot /></Slot>
      </Toolbar>

      <Body>
        <Left>
          <Bookmarks>
            {MARKS.map(([icon, w, t], i) => (
              <Bookmark key={i}>{icon}<Fit w={w}>{t}</Fit></Bookmark>
            ))}
            <Slot $w={12} $ml={85}><Line w={10} h={18} d="M1 1l8 8-8 8" /></Slot>
          </Bookmarks>
          <View>
            <Title><Fit w={657} ml={1}>5-DAYS WEATHER FORECAST</Fit></Title>
            <CityRow>
              <CityLabel><Fit w={64}>City:</Fit></CityLabel>
              <CityInput><Fit w={90}>Dhaka</Fit></CityInput>
            </CityRow>
            <Button><Fit w={121}>Click Me</Fit></Button>
            <CityName><Fit w={137}>--Dhaka--</Fit></CityName>
            <Rule $mt={12} />
            <Cards>
              {DAYS.map(([day, w, min, max]) => (
                <Card key={day}>
                  <Day><Fit w={w}>{day}</Fit></Day>
                  <Picture><Broken /></Picture>
                  <Temps><Fit w={106}>{"Min: " + min}</Fit><Fit w={123} ml={27}>{"Max: " + max}</Fit></Temps>
                </Card>
              ))}
            </Cards>
            <Rule $mt={106} />
            <Scrollbar>
              <Svg w={8} h={15}><path d="M8 0v15L0 7.500z" fill="#8b8b8b" /></Svg>
              <Thumb />
              <Svg w={8} h={15}><path d="M0 0v15l8-7.500z" fill="#8b8b8b" /></Svg>
            </Scrollbar>
          </View>
        </Left>
        <Sidebar>
          {SIDE.map((icon, i) => <SideSlot key={i}>{icon}</SideSlot>)}
          <SideLine $mt={18} />
          <Slot $w={24} $h={96}><Line w={18} d="M8.500 .5v16M.5 8.500h16" sw={1.400} /></Slot>
          <SideLine $mt={130} $mb={3} />
          <SideSlot><Line w={22} h={18} d="M4 1h14q3 0 3 3v10q0 3-3 3H4q-3 0-3-3V4q0-3 3-3zM15 1v16" sw={1.500} /></SideSlot>
          <SideSlot><Line w={20} h={20} d="M9 2H5Q1 2 1 6v9q0 4 4 4h9q4 0 4-4v-3M12 1h7v7M19 1L9 11" sw={1.500} /></SideSlot>
          <SideSlot><Line w={26} d={gearPath(13, 13, 12.300, 9, 6, false)} sw={1.500}><circle cx="13" cy="13" r="3.500" /></Line></SideSlot>
        </Sidebar>
      </Body>

      <Taskbar>
        <Slot $w={72}><Svg w={24}><path d="M0 3.500L10 2v9.500H0zM11 1.800L24 0v11.500H11zM0 12.500h10V22L0 20.500zM11 12.500h13V24l-13-1.800z" fill="#fff" /></Svg></Slot>
        <Search>
          <Line w={24} d="M.8 23.200l9-9" sw={1.700}><circle cx="15.500" cy="8.500" r="7.500" /></Line>
          <SearchText><Fit w={198} ml={18}>Type here to search</Fit></SearchText>
          <Slot $w={104} $ml={62}><Doodle /></Slot>
        </Search>
        <Slot $w={26} $ml={24}><TaskView /></Slot>
        <Task $w={60} $ml={27} $hot $on><Slot $w={36} $ml={3}><Edge /></Slot></Task>
        <TaskEdge />
        <Task $ml={11}><Registry /></Task>
        <Task $ml={12}><ChromeMark overlay="S" /></Task>
        <Task $on><Files /></Task>
        <Task><Gear /></Task>
        <Task><Camera /></Task>
        <Task $on><WordBig /></Task>
        <Task $on><ChromeMark overlay="man" /></Task>
        <Task $on><ChromeMark overlay="tree" /></Task>
        <Task><Shield /></Task>
        <Task $on><Opera /></Task>
        <Task><Panel /></Task>
        <Task $on><Git /></Task>
        <Task $on><Code /></Task>
        <Slot $w={18} $ml={20}><Line w={18} h={10} d="M.8 9.200L9 1l8.200 8.200" sw={1.500} /></Slot>
        <Slot $w={24} $ml={15}><Battery /></Slot>
        <Slot $w={22} $ml={13}><Volume /></Slot>
        <Slot $w={20} $ml={17}><Wifi /></Slot>
        <Lang><Fit w={35} ml={16}>ENG</Fit></Lang>
        <Clock><Fit w={68}>2:21 AM</Fit><Fit w={84}>20-Dec-23</Fit></Clock>
        <Slot $w={24} $ml={27}><Svg><path d="M0 0h24v19h-9l-4 5-4-5H0z" fill="#fff" /><path d="M5 5.500h14M5 9.500h14M5 13.500h9" stroke="#262626" strokeWidth="1.200" /></Svg></Slot>
        <ShowDesktop />
      </Taskbar>
    </Screen>
  );
}
